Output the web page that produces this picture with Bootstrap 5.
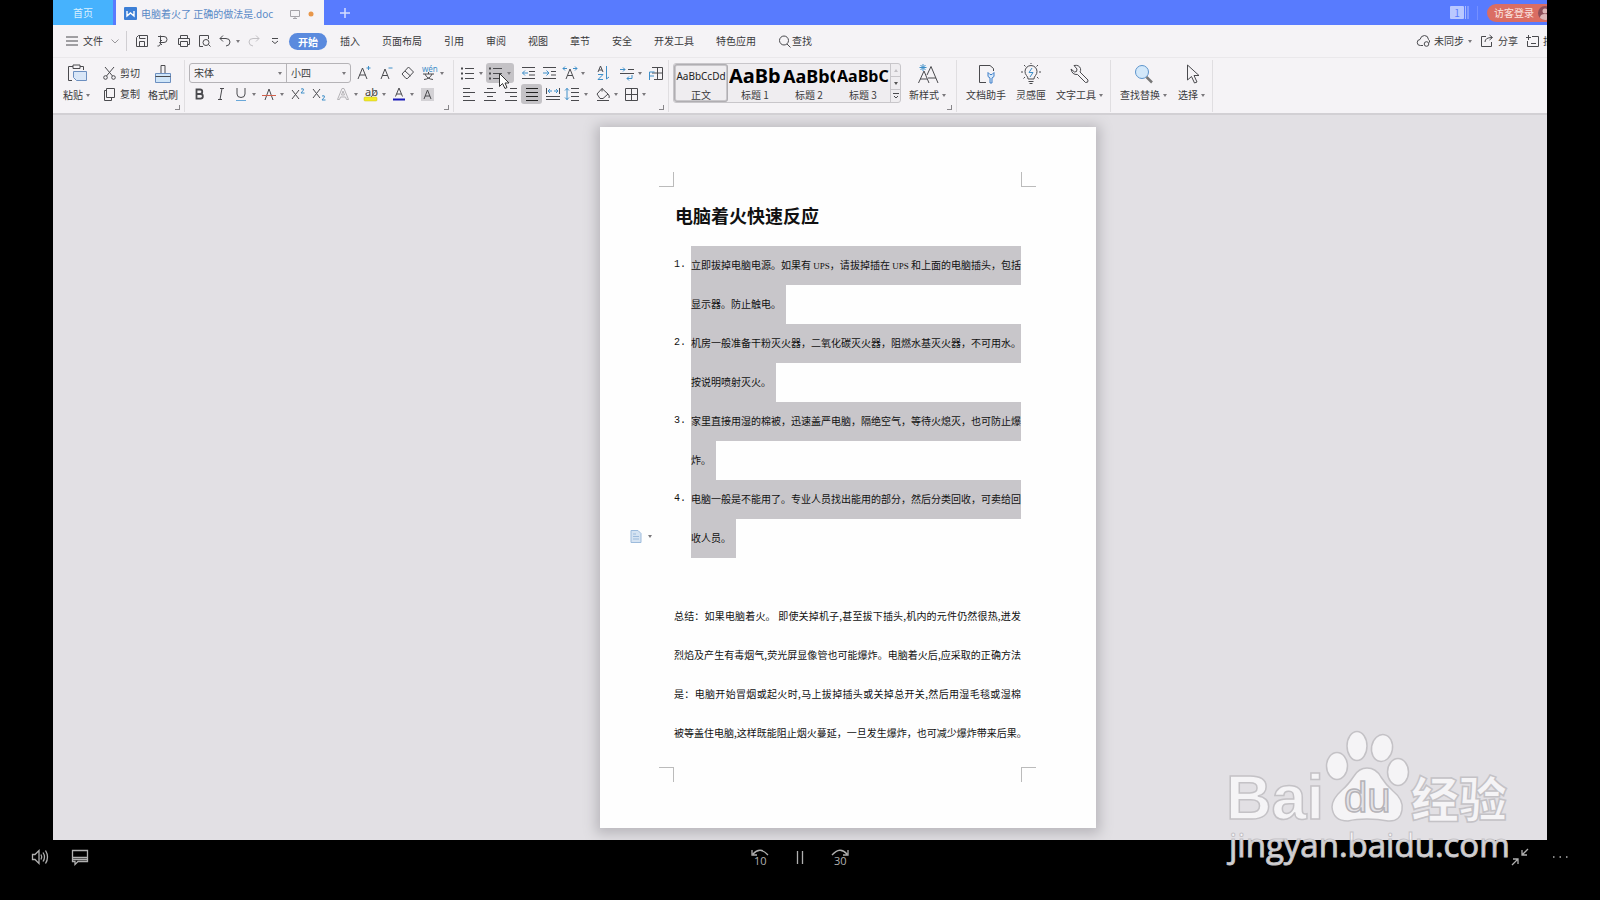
<!DOCTYPE html>
<html lang="zh-CN">
<head>
<meta charset="utf-8">
<meta name="viewport" content="width=device-width, initial-scale=1">
<title>电脑着火了 正确的做法是.doc</title>
<link href="https://cdn.jsdelivr.net/npm/bootstrap@5.3.0/dist/css/bootstrap.min.css" rel="stylesheet">
<style>
body{background:#000;font:10px/14px "Noto Sans CJK SC",sans-serif;color:#3a3a3c}
a{color:inherit;text-decoration:none}
button{background:none;border:0;padding:0;color:inherit}
svg{display:block;flex:none;fill:none;stroke:#4a4a4e;stroke-width:1;overflow:visible}
.stage{padding:0 53px}
.titlebar{height:25px;background:#587bfe}
.hometab{width:60px;background:#46b2fd;color:#d9f0ff}
.doctab{width:208px;margin-left:3px;background:#f5f3f6;color:#5a8ac6;padding:2px 10px 0 8px}
.count{width:14px;height:13px;background:#b9c8ff;color:#587bfe;border-radius:1px;line-height:13px}
.login{height:18px;background:#da6d63;color:#fbe4e0;border-radius:9px 0 0 9px;padding:0 0 0 7px;width:60px;margin-left:9px}
.vr-light{width:1px;height:14px;background:#7590ff}
.menubar{height:33px;background:#f5f3f6;border-bottom:1px solid #eae8eb;padding-left:13px}
.splitter{width:1px;height:20px;background:#d0ced2;margin:0 4px 0 7px}
.tool{width:21px;height:20px;display:flex;align-items:center;justify-content:center}
.drop{width:28px;height:20px;display:flex;align-items:center}
.drop svg{margin:0 1px}
.on{background:#c4c2c6;border-radius:3px}
.cr{width:0;height:0;margin:0 1px;border:2px solid transparent;border-top:3px solid #7a787c;border-bottom:0;flex:none}
.tabs{gap:22px;margin-left:4px}
.pill{background:#5a8ade;color:#fff;font-weight:700;border-radius:9px;padding:2px 9px 1px;margin-right:-9px}
.menubar,.titlebar{overflow:hidden}
.right-tools{margin-right:-16px}
.ribbon{height:57px;background:#f5f3f6;border-bottom:2px solid #d2d0d4;overflow:hidden}
.group{position:relative;border-right:1px solid #e0dee1;padding-top:3px;flex:none;height:52px;margin-top:2px}
.group.corner::after{content:"";position:absolute;right:4px;bottom:2px;width:5px;height:5px;border:solid #88868a;border-width:0 1px 1px 0}
.row-two{margin-top:1px}
.clip{padding-left:10px}
.big{display:flex;flex-direction:column;align-items:center;gap:4px;padding-top:1px}
.big svg{height:20px;width:22px}
.big span{display:flex;align-items:center;gap:2px;white-space:nowrap}
.side{display:flex;align-items:center;gap:4px;height:20px;white-space:nowrap}
.fontbox{width:162px;height:20px;border:1px solid #b5b3b7;border-radius:3px;margin-right:2px}
.fontbox label{position:relative;display:flex;align-items:center}
.fontbox label+label{border-left:1px solid #b5b3b7}
.fontbox select{appearance:none;border:0;background:transparent;font-size:10px;line-height:14px;padding:0 4px;width:100%;color:#3a3a3c}
.fontbox .cr{position:absolute;right:3px}
.gallery{height:40px;border:1px solid #c8c6ca;border-radius:3px;background:#efedf0}
.style-cell{width:54px;overflow:hidden;white-space:nowrap;display:flex;flex-direction:column;align-items:center}
.style-cell b,.style-cell i{font-family:"Noto Sans",sans-serif;font-style:normal;color:#000;height:24px;line-height:24px;display:block;width:52px;text-align:left;overflow:hidden}
.style-cell i{font-size:10px;color:#222;text-align:center}
.style-cell.sel{outline:1px solid #b0aeb2;outline-offset:-1px;border-radius:3px;box-shadow:inset 0 0 0 2px #c9c7cb}
.style-cell .h-a{font-size:20px}.style-cell .h-b{font-size:18px}.style-cell .h-c{font-size:16px}
.scroller{width:10px;border-left:1px solid #c8c6ca}
.scroller button{flex:1;display:flex;align-items:center;justify-content:center}
.scroller button+button{border-top:1px solid #c8c6ca}
.desk{height:725px;background:#e2e0e4;overflow:hidden;padding:12px 0 0 96px}
.sheet{width:496px;background:#fefefe;box-shadow:0 2px 12px 4px #b9b7bc;padding:45px 75px 46px 74px;color:#111;position:relative}
.marks{display:flex;justify-content:space-between;margin:0 -15px;height:15px}
.marks i{width:15px;border:0 solid #bbb}
.marks.top i{border-bottom-width:1px}.marks.bot i{border-top-width:1px}
.marks i:first-child{border-right-width:1px}.marks i:last-child{border-left-width:1px}
.sheet h1{font-size:18px;line-height:57px;font-weight:600;margin:0 0 2px;padding-left:1px}
.sheet ol,.sheet p{list-style:none;margin:0;padding:0;line-height:37px}
.sheet li{display:flex}
.num{width:17px;flex:none;font:10px/37px "Liberation Mono",monospace}
.full,.part{white-space:nowrap;height:39px}
.full{display:block;text-align:justify;text-align-last:justify}
li .full,li .part{background:#c8c6ca}
.part{display:table;padding-right:5px}
.lat{font:9px "Liberation Sans Narrow","Liberation Serif",serif}
.sheet .summary{margin:39px 0 14px}
.paste-opt{position:absolute;left:30px;top:403px;gap:5px}
.pointer{position:absolute;left:45px;top:13px}
.player{height:60px;padding:0 30px;color:#aaa;position:relative;display:grid;grid-template-columns:1fr auto 1fr}
.player svg{stroke:#b0b0b0;stroke-width:1.3}
.player button{width:20px;height:20px}
.player>div{display:flex;height:33px;align-items:center;gap:20px}
.player button text{fill:#b0b0b0;stroke:none;font:11px "Open Sans",sans-serif}
.brand{position:absolute;right:80px;bottom:28px;pointer-events:none}
</style>
</head>
<body>
<main class="stage">
  <header class="titlebar d-flex">
    <a href="#" class="hometab d-flex align-items-center justify-content-center">首页</a>
    <a href="#" class="doctab d-flex align-items-center">
      <svg class="me-1" width="13" height="13"><rect width="13" height="13" rx="1" fill="#3d7fd6" stroke="none"/><path d="M3 4v5l3.500-3 3.500 3V4" stroke="#fff" stroke-width="1.400"/></svg>
      <span class="text-nowrap">电脑着火了 正确的做法是.doc</span>
      <svg class="ms-auto me-2" width="10" height="10"><path d="M.5 1.500h9v6h-9zM5 7.500v2M3 9.500h4" stroke="#a5a3a8"/></svg>
      <svg width="6" height="6"><circle cx="3" cy="3" r="2.500" fill="#e8974a" stroke="none"/></svg>
    </a>
    <button class="ms-3" aria-label="新建"><svg width="10" height="10"><path d="M5 0v10M0 5h10" stroke="#d5deff" stroke-width="1.500"/></svg></button>
    <div class="ms-auto d-flex align-items-center">
      <span class="count text-center">1</span>
      <svg width="5" height="13"><path d="M1.500 0v13M4 0v13" stroke="#a9bbff"/></svg>
      <span class="vr-light ms-2"></span>
      <button class="login d-flex align-items-center text-nowrap overflow-hidden">访客登录<svg class="ms-1" width="14" height="14"><g stroke="none"><circle cx="7" cy="7" r="7" fill="#8d4e5a"/><circle cx="7" cy="5" r="2.500" fill="#dcb6b8"/><path d="M2 12q0-4 5-4t5 4q-5 4-10 0" fill="#dcb6b8"/></g></svg></button>
    </div>
  </header>

  <nav class="menubar d-flex align-items-center text-nowrap">
    <button class="d-flex align-items-center"><svg class="me-1" width="13" height="10"><path d="M0 1h12M0 5h12M0 9h12"/></svg>文件<svg class="ms-2" width="8" height="5"><path d="M.5.5 4 4 7.500.5" stroke="#99979b"/></svg></button>
    <span class="splitter"></span>
    <button class="tool" aria-label="保存"><svg width="12" height="12"><path d="M.5 2.500v9h11v-11h-9zM3.500 11.500v-5h5v5M3.500.5v3h6"/></svg></button>
    <button class="tool" aria-label="输出"><svg width="12" height="12"><path d="M1 1.500h6a3 3 0 0 1 0 6H3M3.500.5v7q0 4-3 3.500M5 5 2.500 7.500 5 10"/></svg></button>
    <button class="tool" aria-label="打印"><svg width="12" height="12"><path d="M2.500 3.500v-3h7v3M2.500 9.500h-2v-6h11v6h-2M2.500 6.500h7v5h-7z"/></svg></button>
    <button class="tool" aria-label="预览"><svg width="12" height="12"><path d="M4 11.500H.5V.5h9V4M9.500 9.500l2 2"/><circle cx="7" cy="7.500" r="3"/></svg></button>
    <button class="drop" aria-label="撤销"><svg width="18" height="12"><path d="M7 .5 4 3.500 7 6.500M4 3.500h6q4 0 4 3.500t-4 4"/></svg><span class="cr"></span></button>
    <button class="tool" aria-label="恢复"><svg width="12" height="12"><path d="M8 .5l3 3-3 3M11 3.500H5Q1 3.500 1 7t4 4" stroke="#c2c0c4"/></svg></button>
    <button class="tool" aria-label="更多"><svg width="8" height="8"><path d="M1 1.500h6M1 4l3 2.500L7 4"/></svg></button>
    <div class="tabs d-flex align-items-center">
      <a href="#" class="pill">开始</a><a href="#">插入</a><a href="#">页面布局</a><a href="#">引用</a><a href="#">审阅</a><a href="#">视图</a><a href="#">章节</a><a href="#">安全</a><a href="#">开发工具</a><a href="#">特色应用</a>
      <button class="d-flex align-items-center"><svg width="14" height="13"><circle cx="6" cy="5.500" r="4.500"/><path d="m9 9 3.500 3.500"/></svg>查找</button>
    </div>
    <div class="right-tools ms-auto d-flex align-items-center gap-2">
      <button class="d-flex align-items-center"><svg class="me-1" width="13" height="12"><path d="M6 10.500H3.500a3 3 0 0 1-.5-6q1-4 4.500-4t4 4q1.500 1 1 3"/><circle cx="9.500" cy="9" r="2.300"/></svg>未同步<span class="cr ms-1"></span></button>
      <button class="d-flex align-items-center"><svg class="me-1" width="13" height="12"><path d="M5 1.500H.5v10h10V7M4 7q0-4.500 7-4.500M8.500 0l3 2.500-3 2.500"/></svg>分享</button>
      <button class="d-flex align-items-center"><svg class="me-1" width="13" height="12"><path d="M6 1.500h6.500v10H1.500V6M0 2.500h5M2.500 0v5M5 8.500h5"/></svg>批注</button>
    </div>
  </nav>

  <section class="ribbon d-flex">
    <div class="group corner clip d-flex" style="width:132px">
      <button class="big"><svg viewBox="0 0 22 20"><path d="M7 2.500H2.500v14H6M14 2.500h3.500V6M7 1h7v3.500H7z"/><path d="M7.500 7.500h13v9h-10l-3-3z" fill="#d9e6f7" stroke="#6c8fc0"/></svg><span>粘贴<i class="cr"></i></span></button>
      <div class="ms-2 ps-1">
        <button class="side"><svg width="13" height="13"><path d="M2 0l7.500 9M11 0 3.500 9"/><circle cx="2.500" cy="10.500" r="1.800"/><circle cx="10.500" cy="10.500" r="1.800"/></svg>剪切</button>
        <button class="side row-two"><svg width="13" height="13"><path d="M3.500.5h8v9h-8zM3.500 2.500h-2v10h7v-3"/></svg>复制</button>
      </div>
      <button class="big ms-2"><svg viewBox="0 0 22 20"><path d="M9 9.500V1.500h4v8"/><path d="M3.500 9.500h15v9h-15z" fill="#cfe5f8" stroke="#6c8fc0"/><path d="M3.500 12.500h15"/></svg><span>格式刷</span></button>
    </div>

    <div class="group corner ps-1" style="width:269px">
      <div class="d-flex">
        <div class="fontbox d-flex">
          <label style="width:96px"><select aria-label="字体"><option>宋体</option></select><i class="cr"></i></label>
          <label class="flex-fill"><select aria-label="字号"><option>小四</option></select><i class="cr"></i></label>
        </div>
        <div class="d-flex" style="gap:1px">
          <button class="tool" aria-label="增大字号"><svg width="14" height="14"><path d="m1 13 4.500-11L10 13M2.500 9h6"/><path d="M11.500 0v4M9.500 2h4" stroke="#3f8fc9"/></svg></button>
          <button class="tool" aria-label="减小字号"><svg width="14" height="14"><path d="m2 13 4-10 4 10M3.500 9.500h5"/><path d="M9.500 2h4" stroke="#3f8fc9"/></svg></button>
          <button class="tool" aria-label="清除格式"><svg width="14" height="14"><path d="m1 8 6.500-7 5 5-6 6.500H5zM4 5l5.500 5"/></svg></button>
          <button class="drop" aria-label="拼音"><svg width="18" height="14"><text x="2" y="6" font-size="8" font-family="Noto Sans" fill="#3f8fc9" stroke="none">wén</text><path d="M3 8h11M8.500 6v2M5 8q2 5 8 5.500M12 8q-2 5-8 5.500"/></svg><i class="cr"></i></button>
        </div>
      </div>
      <div class="d-flex row-two">
        <button class="tool" aria-label="加粗"><svg width="12" height="12"><path d="M2.500 1.500H6a2.200 2.200 0 0 1 0 4.500H2.500zM2.500 6h4a2.300 2.300 0 0 1 0 4.700h-4z" stroke-width="1.800"/></svg></button>
        <button class="tool" aria-label="倾斜"><svg width="12" height="12"><path d="M5 .5h4M3 11.500h4M7 .5l-2 11"/></svg></button>
        <button class="drop" aria-label="下划线"><svg width="18" height="14"><path d="M5 1v6q0 3.500 4 3.500t4-3.500V1"/><path d="M4 13.500h10" stroke="#6aa7d8"/></svg><i class="cr"></i></button>
        <button class="drop" aria-label="删除线"><svg width="18" height="12"><path d="M5 12 9 1l4 11"/><path d="M2 7.500h14" stroke="#d0604c"/></svg><i class="cr"></i></button>
        <button class="tool" aria-label="上标"><svg width="14" height="12"><path d="m1 2 7 9M8 2l-7 9"/><path d="M10 1q3-1 2.500 1L10 5h3.500" stroke="#3f8fc9"/></svg></button>
        <button class="tool me-1" aria-label="下标"><svg width="14" height="12"><path d="m1 1 7 9M8 1l-7 9"/><path d="M10 8q3-1 2.500 1L10 12h3.500" stroke="#3f8fc9"/></svg></button>
        <button class="drop" aria-label="文字效果"><svg width="18" height="12"><path d="M3.500 11.500 8 .5h2l4.500 11h-2L11.500 9h-5l-1 2.500zM7.500 7 9 3l1.500 4z" stroke="#b5b3b7"/></svg><i class="cr"></i></button>
        <button class="drop" aria-label="突出显示"><svg width="18" height="14"><rect x="2" y="10" width="13" height="4" rx="1" fill="#f3ec26" stroke="#c8bf20" stroke-width=".5"/><text x="3" y="9" font-size="11" font-family="Noto Sans" fill="#444" stroke="none">ab</text><path d="m9 10 6-7" stroke="#666"/></svg><i class="cr"></i></button>
        <button class="drop" aria-label="字体颜色"><svg width="18" height="14"><path d="M5.500 9.500 9 1l3.500 8.500M6.500 7h5"/><path d="M3 12.500h12" stroke="#1a1ab8" stroke-width="2"/></svg><i class="cr"></i></button>
        <button class="tool" aria-label="底纹"><svg width="13" height="13"><path d="M0 0h13v13H0z" fill="#d3d1d5" stroke="none"/><path d="m3 11 3.500-9 3.500 9M4 8h5"/></svg></button>
      </div>
    </div>

    <div class="group corner ps-1" style="width:215px">
      <div class="d-flex">
        <button class="drop" aria-label="项目符号"><svg width="18" height="12"><path d="M6 1.500h9M6 6.500h9M6 11.500h9"/><path d="M2 1.500h2M2 6.500h2M2 11.500h2" stroke-width="2"/></svg><i class="cr"></i></button>
        <button class="drop on" aria-label="编号"><svg width="18" height="12"><path d="M6 1.500h9M6 6.500h9M6 11.500h9"/><path d="M2 1.500h2M2 6.500h2M2 11.500h2" stroke-width="2"/></svg><i class="cr"></i></button>
        <button class="tool ms-1" aria-label="减少缩进"><svg width="13" height="12"><path d="M0 .5h13M7 4.500h6M7 8h6M0 11.500h13"/><path d="M6 6H.5M3 3.500.5 6 3 8.500" stroke="#3f8fc9"/></svg></button>
        <button class="tool" aria-label="增加缩进"><svg width="13" height="12"><path d="M0 .5h13M8 4.500h5M8 8h5M0 11.500h13"/><path d="M0 6h6M3.500 3.500 6 6 3.500 8.500" stroke="#3f8fc9"/></svg></button>
        <button class="drop me-1" aria-label="字符缩放"><svg width="18" height="14"><path d="M5 13 9 3l4 10M6.500 9.500h5"/><path d="M2 2.500h4M4 .5l-2 2 2 2M12 2.500h4M14 .5l2 2-2 2" stroke="#3f8fc9"/></svg><i class="cr"></i></button>
        <button class="tool me-1" aria-label="排序"><svg width="12" height="14"><path d="m1 6 2.500-6L6 6M2 4h3"/><path d="M1 8.500h5l-5 5h5M9.500 0v13M9.500 13l2.500-2" stroke="#3f8fc9"/></svg></button>
        <button class="drop" aria-label="制表符"><svg width="18" height="13"><path d="M10 2.500h6M2 6.500h14"/><path d="M2 2.500h5M5 .5l2 2-2 2M14 8v3.500H9M11 9.500 9 11.500l2 2" stroke="#3f8fc9"/></svg><i class="cr"></i></button>
        <button class="tool" aria-label="表格"><svg width="14" height="13"><path d="M3 .5h10.500v12H5M8.500.5v12M3 6h10.500"/><path d="M.5 13V5h5M.5 9H5" stroke="#3f8fc9"/></svg></button>
      </div>
      <div class="d-flex row-two">
        <button class="tool" aria-label="左对齐"><svg width="12" height="12"><path d="M0 .5h7M0 4.500h12M0 8.500h7M0 12.500h12"/></svg></button>
        <button class="tool" aria-label="居中"><svg width="12" height="12"><path d="M3 .5h6M0 4.500h12M3 8.500h6M0 12.500h12"/></svg></button>
        <button class="tool" aria-label="右对齐"><svg width="12" height="12"><path d="M5 .5h7M0 4.500h12M5 8.500h7M0 12.500h12"/></svg></button>
        <button class="tool on" aria-label="两端对齐"><svg width="12" height="12"><path d="M0 .5h12M0 4.500h12M0 8.500h12M0 12.500h12" stroke="#222"/></svg></button>
        <button class="tool" aria-label="分散对齐"><svg width="14" height="12"><path d="M0 8.500h14M0 11.500h14M.5 0v6M13.500 0v6"/><path d="M2 3h4M4 1 2 3l2 2M8 3h4M10 1l2 2-2 2" stroke="#3f8fc9"/></svg></button>
        <button class="drop" style="margin-right:2px" aria-label="行距"><svg width="18" height="12"><path d="M7 .5h8M7 4.500h8M7 8.500h8M7 12.500h8"/><path d="M3 0v12M1 2.500 3 .5l2 2M1 9.500l2 2 2-2" stroke="#3f8fc9"/></svg><i class="cr"></i></button>
        <button class="drop" aria-label="底纹颜色"><svg width="18" height="13"><path d="m3 6 5-5.500L14 6l-5 4.500H6zM8 .5v3M14 6q2 2 1 4M3 12.500h12"/></svg><i class="cr"></i></button>
        <button class="drop" aria-label="边框"><svg width="18" height="12"><path d="M3.500 .5h12v12h-12zM9.500 .5v12M3.500 6.500h12"/></svg><i class="cr"></i></button>
      </div>
      <svg class="pointer" width="10" height="16"><path d="M.5.5v13l3-3 2.500 5 2-1-2-4.500h4z" fill="#fff" stroke="#333"/></svg>
    </div>

    <div class="group corner d-flex ps-1" style="width:288px">
      <div class="gallery d-flex">
        <button class="style-cell sel"><i>AaBbCcDd</i>正文</button>
        <button class="style-cell"><b class="h-a">AaBb</b>标题 1</button>
        <button class="style-cell"><b class="h-b">AaBbC</b>标题 2</button>
        <button class="style-cell"><b class="h-c">AaBbCc</b>标题 3</button>
        <div class="scroller d-flex flex-column">
          <button aria-label="上"><svg width="4" height="3"><path d="m0 3 2-3 2 3z" fill="#c2c0c4" stroke="none"/></svg></button>
          <button aria-label="下"><svg width="4" height="3"><path d="m0 0 2 3 2-3z" fill="#555" stroke="none"/></svg></button>
          <button aria-label="更多样式"><svg width="6" height="6"><path d="M0 .5h6M1 3l2 2 2-2"/></svg></button>
        </div>
      </div>
      <button class="big ms-2"><svg viewBox="0 0 22 20"><path d="M1.500 19 7 7l5 12M3 15h7M10 11l4-8.500L21 19M11 14h8"/><path d="M6 0v7M2.500 3.500h7M3.500 1l5 5M8.500 1l-5 5" stroke="#3f8fc9"/></svg><span>新样式<i class="cr"></i></span></button>
    </div>

    <div class="group d-flex" style="width:154px;gap:10px;padding-left:9px">
      <button class="big"><svg viewBox="0 0 22 20"><path d="M11 18.500H4.500v-17H15l3.500 3V7"/><path d="M13 8.500v4l2 1.500v5h2v-5l2-1.500v-4l-2 2h-2z" stroke="#3f7fc9" fill="#d9e9f9"/></svg><span>文档助手</span></button>
      <button class="big"><svg viewBox="0 0 22 20"><path d="M8 15q0-2-1.500-3.500a6 6 0 1 1 9 0Q14 13 14 15zM8.500 17.500h5M9.500 19.500h3M11 0v-1M1 8h2M19 8h2M4 1l1.500 1.500M18 1l-1.500 1.500M3.500 14.500 5 13M18.500 14.500 17 13"/><path d="m12 4-3 4.500h4L10 13" stroke="#3f8fc9"/></svg><span>灵感匣</span></button>
      <button class="big"><svg viewBox="0 0 22 20"><path d="M5 1.500q5-1 6.500 3 .5 2-.5 3.500l8 8q.5 3-2.500 2.500l-8-8Q3 11 2 5l3.500 3 2-.5.5-2.500z"/></svg><span>文字工具<i class="cr"></i></span></button>
    </div>
    <div class="group d-flex" style="width:102px;gap:10px;padding-left:9px">
      <button class="big"><svg viewBox="0 0 22 20"><circle cx="9" cy="8" r="6.500" fill="#d3e8fa" stroke="#5c94cc"/><path d="m13.500 13 5.500 5.500" stroke-width="2.500" stroke="#777"/></svg><span>查找替换<i class="cr"></i></span></button>
      <button class="big"><svg viewBox="0 0 22 20"><path d="M6.500 1v15l4-3.500 3 6.500 2.500-1-3-6.500h5z"/></svg><span>选择<i class="cr"></i></span></button>
    </div>
  </section>

  <section class="desk">
    <article class="sheet mx-auto">
      <div class="marks top"><i></i><i></i></div>
      <h1>电脑着火快速反应</h1>
      <ol>
        <li><span class="num">1.</span><div class="flex-fill"><span class="full">立即拔掉电脑电源。如果有 <span class="lat">UPS</span>，请拔掉插在 <span class="lat">UPS</span> 和上面的电脑插头，包括</span><span class="part">显示器。防止触电。</span></div></li>
        <li><span class="num">2.</span><div class="flex-fill"><span class="full">机房一般准备干粉灭火器，二氧化碳灭火器，阻燃水基灭火器，不可用水。</span><span class="part">按说明喷射灭火。</span></div></li>
        <li><span class="num">3.</span><div class="flex-fill"><span class="full">家里直接用湿的棉被，迅速盖严电脑，隔绝空气，等待火熄灭，也可防止爆</span><span class="part">炸。</span></div></li>
        <li><span class="num">4.</span><div class="flex-fill"><span class="full">电脑一般是不能用了。专业人员找出能用的部分，然后分类回收，可卖给回</span><span class="part">收人员。</span></div></li>
      </ol>
      <p class="summary"><span class="full">总结：如果电脑着火。 即使关掉机子,甚至拔下插头,机内的元件仍然很热,迸发</span><span class="full">烈焰及产生有毒烟气,荧光屏显像管也可能爆炸。电脑着火后,应采取的正确方法</span><span class="full">是：电脑开始冒烟或起火时,马上拔掉插头或关掉总开关,然后用湿毛毯或湿棉</span><span class="full">被等盖住电脑,这样既能阻止烟火蔓延，一旦发生爆炸，也可减少爆炸带来后果。</span></p>
      <div class="marks bot"><i></i><i></i></div>
      <button class="paste-opt d-flex align-items-center" aria-label="粘贴选项"><svg width="12" height="13"><path d="M1 .5h7l3 3v9H1zM3 4h3M3 6.500h6M3 9h6" fill="#d5e3f2" stroke="#9dbbdc"/></svg><i class="cr"></i></button>
    </article>
  </section>
</main>

<footer class="player">
  <div>
    <button aria-label="音量"><svg width="20" height="20"><path d="M2.500 7.500H5l4-4v13l-4-4H2.500zM11 7.500q1.500 2.500 0 5M13 5.500q3 4.500 0 9M15.500 3.500q4 6.500 0 13"/></svg></button>
    <button aria-label="字幕"><svg width="20" height="20"><path d="M2.500 3.500h15v11H8l-3 3v-3H2.500zM3 10.500h14M3 12.500h14"/></svg></button>
  </div>
  <div>
    <button aria-label="后退 10 秒"><svg width="20" height="20"><path d="M3 7q7-8 15 1M2 3v5h5"/><text x="4" y="18">10</text></svg></button>
    <button aria-label="暂停"><svg width="20" height="20"><path d="M7.500 4v13M12.500 4v13"/></svg></button>
    <button aria-label="前进 30 秒"><svg width="20" height="20"><path d="M2 8q8-9 15-1M18 3v5h-5"/><text x="4" y="18">30</text></svg></button>
  </div>
  <div class="justify-content-end">
    <button aria-label="退出全屏"><svg width="20" height="20"><path d="m18 2-6 6M12 3v5h5M2 18l6-6M3 12h5v5"/></svg></button>
    <button aria-label="更多"><svg width="20" height="20"><path d="M3 10h1.500M9.500 10h1.500M16 10h1.500" stroke-width="1.500"/></svg></button>
  </div>
  <svg class="brand" width="300" height="150" role="img" aria-label="百度经验">
    <defs><linearGradient id="fade" x1="0" y1="117" x2="0" y2="119" gradientUnits="userSpaceOnUse"><stop offset="0" stop-color="#f8f7f9"/><stop offset="1" stop-color="#d4d4d4"/></linearGradient></defs>
    <g style="fill:#f5f4f6;stroke:#c4c2c6;stroke-width:1.500">
      <text x="6" y="97" style="font:bold 63px 'Liberation Sans',sans-serif">Bai</text>
      <ellipse cx="117" cy="44" rx="10.500" ry="13.500"/><ellipse cx="137" cy="24" rx="10" ry="14.500"/><ellipse cx="162" cy="26" rx="10.500" ry="13.500" transform="rotate(10 162 26)"/><ellipse cx="178" cy="50" rx="10.500" ry="13.500"/>
      <path d="M147 46q9 0 14 9 5 8 12 14 11 9 9 19-2 12-14 11-10-2-21-2t-19 2q-15 0-16-14 0-8 10-17 6-5 12-14 5-8 13-8z"/>
      <text x="124" y="90" style="font:42px 'Liberation Sans',sans-serif;fill:#e4e2e6;stroke:#b5b3b8">du</text>
      <text x="191" y="95" style="font:900 48px 'Noto Sans CJK SC',sans-serif">经验</text>
    </g>
    <text x="9" y="135" style="font:33px 'Open Sans',sans-serif;fill:url(#fade);stroke:#c4c2c6;stroke-width:1px">jingyan.baidu.com</text>
  </svg>
</footer>
<script src="https://cdn.jsdelivr.net/npm/bootstrap@5.3.0/dist/js/bootstrap.bundle.min.js"></script>
</body>
</html>
